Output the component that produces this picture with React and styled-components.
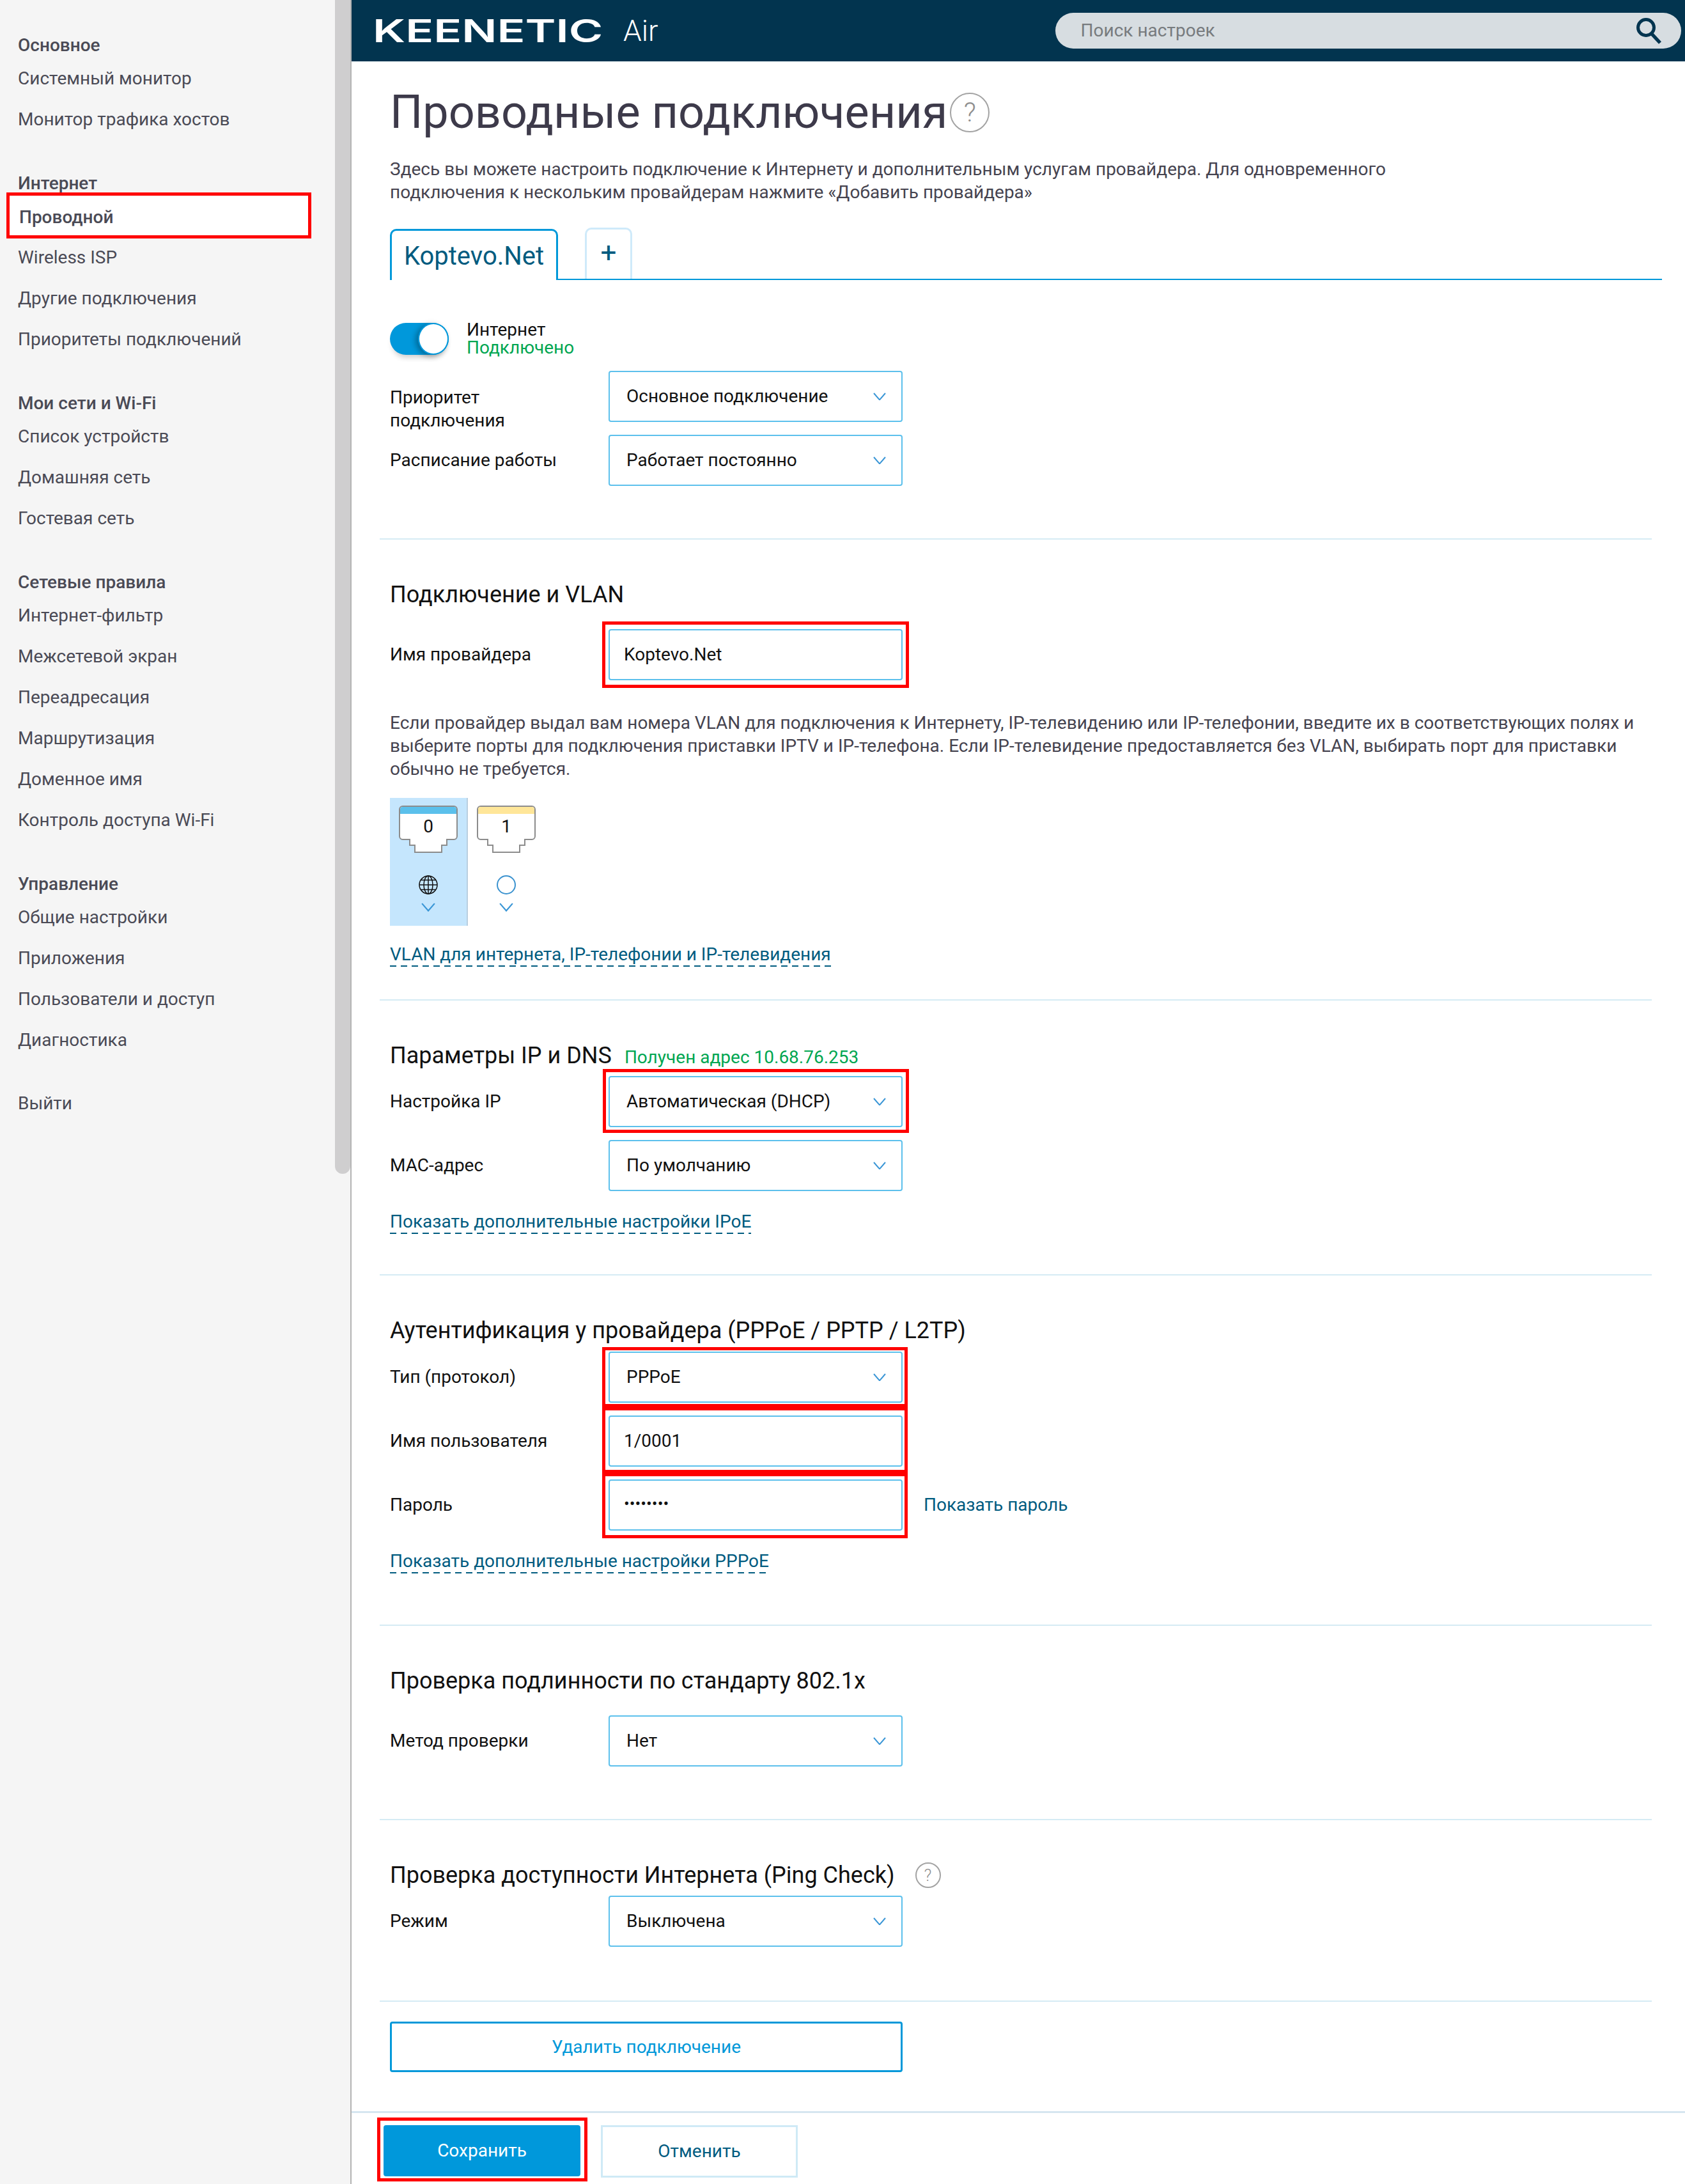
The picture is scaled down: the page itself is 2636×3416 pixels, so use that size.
import styled, { createGlobalStyle } from 'styled-components';

const GlobalStyle = createGlobalStyle`
    html, body {
        margin: 0;
        padding: 0;
        background: #ffffff;
    }
    * {
        box-sizing: border-box;
    }
`;

const menu = [
    { title: 'Основное', items: ['Системный монитор', 'Монитор трафика хостов'] },
    { title: 'Интернет', items: ['Проводной', 'Wireless ISP', 'Другие подключения', 'Приоритеты подключений'] },
    { title: 'Мои сети и Wi-Fi', items: ['Список устройств', 'Домашняя сеть', 'Гостевая сеть'] },
    { title: 'Сетевые правила', items: ['Интернет-фильтр', 'Межсетевой экран', 'Переадресация', 'Маршрутизация', 'Доменное имя', 'Контроль доступа Wi-Fi'] },
    { title: 'Управление', items: ['Общие настройки', 'Приложения', 'Пользователи и доступ', 'Диагностика'] },
];

const Chevron = ({ size = 20 }) => (
    <svg width={size} height={size * 0.62} viewBox="0 0 20 12.4" fill="none">
        <path d="M1 1l9 10.4L19 1" stroke="#3a96d6" strokeWidth="2" />
    </svg>
);

const Globe = () => (
    <svg width="30" height="30" viewBox="0 0 30 30" fill="none" stroke="#111" strokeWidth="1.5">
        <circle cx="15" cy="15" r="14" />
        <ellipse cx="15" cy="15" rx="7" ry="14" />
        <path d="M15 1v28M1 15h28M3.5 7.5h23M3.5 22.5h23" />
    </svg>
);

const Port = ({ number, band }) => (
    <svg width="92" height="74" viewBox="0 0 92 74">
        <path d="M1 6a5 5 0 0 1 5-5h80a5 5 0 0 1 5 5v42a5 5 0 0 1-5 5H75v9h-8v11H25V62h-8v-9H6a5 5 0 0 1-5-5z" fill="#fff" stroke="#8c8c8c" strokeWidth="2" />
        <path d="M2 13V6a4 4 0 0 1 4-4h80a4 4 0 0 1 4 4v7z" fill={band} />
        <text x="46" y="42" textAnchor="middle" fontFamily="Roboto, sans-serif" fontSize="28" fill="#111">{number}</text>
    </svg>
);

const SearchIcon = () => (
    <svg width="40" height="42" viewBox="0 0 40 42" fill="none" stroke="#02344f">
        <circle cx="15" cy="16" r="12.5" strokeWidth="5" />
        <path d="M24 26l13 14" strokeWidth="5.5" />
    </svg>
);

const Select = ({ value }) => (
    <Field>
        <span>{value}</span>
        <Chevron />
    </Field>
);

const App = () => {
    return (
        <>
            <GlobalStyle />
            <Page>
                <Sidebar>
                    {menu.map((group) => (
                        <MenuGroup key={group.title}>
                            <MenuTitle>{group.title}</MenuTitle>
                            {group.items.map((item) => (
                                <MenuItem key={item} $active={item === 'Проводной'}>{item}</MenuItem>
                            ))}
                        </MenuGroup>
                    ))}
                    <LogoutGroup>
                        <MenuItem>Выйти</MenuItem>
                    </LogoutGroup>
                    <ScrollThumb />
                </Sidebar>
                <Main>
                    <Header>
                        <Logo>KEENETIC</Logo>
                        <Model>Air</Model>
                        <Search>
                            <span>Поиск настроек</span>
                            <SearchIcon />
                        </Search>
                    </Header>
                    <Content>
                        <Intro>
                            <TitleRow>
                                <Title>Проводные подключения</Title>
                                <Help $size={62} $font={42}>?</Help>
                            </TitleRow>
                            <IntroText>
                                Здесь вы можете настроить подключение к Интернету и дополнительным услугам провайдера. Для одновременного<br />
                                подключения к нескольким провайдерам нажмите «Добавить провайдера»
                            </IntroText>
                            <Tabs>
                                <Tab>Koptevo.Net</Tab>
                                <AddTab>+</AddTab>
                            </Tabs>
                            <ToggleRow>
                                <Toggle><Knob /></Toggle>
                                <ToggleText>
                                    <span>Интернет</span>
                                    <Status>Подключено</Status>
                                </ToggleText>
                            </ToggleRow>
                            <Fields $top={22}>
                                <Row>
                                    <LongLabel>Приоритет<br />подключения</LongLabel>
                                    <Select value="Основное подключение" />
                                </Row>
                                <Row>
                                    <Label>Расписание работы</Label>
                                    <Select value="Работает постоянно" />
                                </Row>
                            </Fields>
                        </Intro>

                        <Section $bottom={51}>
                            <Heading>Подключение и VLAN</Heading>
                            <Fields $top={32}>
                                <Row>
                                    <Label>Имя провайдера</Label>
                                    <Marked $inset="-12px -10px -12px -10px">
                                        <Input>Koptevo.Net</Input>
                                    </Marked>
                                </Row>
                            </Fields>
                            <SectionText>
                                Если провайдер выдал вам номера VLAN для подключения к Интернету, IP-телевидению или IP-телефонии, введите их в соответствующих полях и<br />
                                выберите порты для подключения приставки IPTV и IP-телефона. Если IP-телевидение предоставляется без VLAN, выбирать порт для приставки<br />
                                обычно не требуется.
                            </SectionText>
                            <Ports>
                                <PortCell $selected>
                                    <Port number="0" band="#5bc0eb" />
                                    <Globe />
                                    <Chevron size={22} />
                                </PortCell>
                                <PortCell>
                                    <Port number="1" band="#ffe699" />
                                    <EmptyMark />
                                    <Chevron size={22} />
                                </PortCell>
                            </Ports>
                            <DashedLink $top={27}>VLAN для интернета, IP-телефонии и IP-телевидения</DashedLink>
                        </Section>

                        <Section $bottom={63}>
                            <HeadingRow>
                                <Heading>Параметры IP и DNS</Heading>
                                <HeadingStatus>Получен адрес 10.68.76.253</HeadingStatus>
                            </HeadingRow>
                            <Fields $top={10}>
                                <Row>
                                    <Label>Настройка IP</Label>
                                    <Marked $inset="-11px -10px -9px -9px">
                                        <Select value="Автоматическая (DHCP)" />
                                    </Marked>
                                </Row>
                                <Row>
                                    <Label>MAC-адрес</Label>
                                    <Select value="По умолчанию" />
                                </Row>
                            </Fields>
                            <DashedLink $top={30}>Показать дополнительные настройки IPoE</DashedLink>
                        </Section>

                        <Section $bottom={80}>
                            <Heading>Аутентификация у провайдера (PPPoE / PPTP / L2TP)</Heading>
                            <Fields $top={11}>
                                <Row>
                                    <Label>Тип (протокол)</Label>
                                    <Marked $inset="-7px -8px -7px -10px">
                                        <Select value="PPPoE" />
                                    </Marked>
                                </Row>
                                <Row>
                                    <Label>Имя пользователя</Label>
                                    <Marked $inset="-13px -8px -10px -10px">
                                        <Input>1/0001</Input>
                                    </Marked>
                                </Row>
                                <Row>
                                    <Label>Пароль</Label>
                                    <Marked $inset="-10px -8px -12px -10px">
                                        <Input><Dots>••••••••</Dots></Input>
                                    </Marked>
                                    <ShowPassword>Показать пароль</ShowPassword>
                                </Row>
                            </Fields>
                            <DashedLink $top={30}>Показать дополнительные настройки PPPoE</DashedLink>
                        </Section>

                        <Section $bottom={82}>
                            <Heading>Проверка подлинности по стандарту 802.1x</Heading>
                            <Fields $top={32}>
                                <Row>
                                    <Label>Метод проверки</Label>
                                    <Select value="Нет" />
                                </Row>
                            </Fields>
                        </Section>

                        <Section $bottom={84}>
                            <HeadingRow>
                                <Heading>Проверка доступности Интернета (Ping Check)</Heading>
                                <Help $size={40} $font={26} $center>?</Help>
                            </HeadingRow>
                            <Fields $top={10}>
                                <Row>
                                    <Label>Режим</Label>
                                    <Select value="Выключена" />
                                </Row>
                            </Fields>
                        </Section>

                        <DeleteBlock>
                            <DeleteButton>Удалить подключение</DeleteButton>
                        </DeleteBlock>
                    </Content>
                    <Footer>
                        <Marked $inset="-12px -11px -8px -10px">
                            <SaveButton>Сохранить</SaveButton>
                        </Marked>
                        <CancelButton>Отменить</CancelButton>
                    </Footer>
                </Main>
            </Page>
        </>
    );
};

export default App;

const Page = styled.div`
    display: flex;
    width: 2636px;
    height: 3416px;
    overflow: hidden;
    font-family: Roboto, "Noto Sans", sans-serif;
    font-size: 28px;
    line-height: 36px;
    color: #111111;
    background: #ffffff;
`;

const Sidebar = styled.nav`
    position: relative;
    flex: 0 0 550px;
    padding-top: 51px;
    background: #f5f5f5;
    border-right: 2px solid #b4b4b4;
    color: #4a4a55;
`;

const ScrollThumb = styled.div`
    position: absolute;
    top: 0;
    right: 0;
    width: 24px;
    height: 1836px;
    border-radius: 0 0 12px 12px;
    background: #cfcecf;
`;

const MenuGroup = styled.div`
    margin-bottom: 48px;
`;

const LogoutGroup = styled.div`
    margin-top: -13px;
`;

const MenuTitle = styled.div`
    height: 40px;
    padding: 2px 0 0 28px;
    font-weight: 500;
`;

const MenuItem = styled.div`
    position: relative;
    display: flex;
    align-items: center;
    height: 64px;
    padding-left: ${(p) => (p.$active ? '15px' : '28px')};
    padding-top: ${(p) => (p.$active ? '2px' : '0')};
    margin: ${(p) => (p.$active ? '0 66px 0 15px' : '0')};
    font-weight: ${(p) => (p.$active ? 500 : 400)};
    background: ${(p) => (p.$active ? '#ffffff' : 'transparent')};

    ${(p) => p.$active && `
        &::after {
            content: '';
            position: absolute;
            inset: -6px -5px -2px -5px;
            border: 5px solid #ff0000;
        }
    `}
`;

const Main = styled.div`
    flex: 1;
    display: flex;
    flex-direction: column;
    min-width: 0;
`;

const Header = styled.header`
    display: flex;
    align-items: center;
    flex: 0 0 96px;
    padding-left: 33px;
    background: #02344f;
    color: #ffffff;
`;

const Logo = styled.div`
    width: 357px;
    font-family: Inter, Roboto, sans-serif;
    font-size: 50px;
    font-weight: 600;
    line-height: 50px;
    white-space: nowrap;
    transform: scaleX(1.455);
    transform-origin: left center;
`;

const Model = styled.div`
    margin-left: 35px;
    font-size: 46px;
    font-weight: 300;
    line-height: 50px;
`;

const Search = styled.div`
    display: flex;
    align-items: center;
    justify-content: space-between;
    width: 979px;
    height: 56px;
    margin-left: 621px;
    padding: 0 30px 0 40px;
    border-radius: 28px;
    background: #d7dde1;
    color: #777b7e;
`;

const Content = styled.main`
    flex: 1;
    margin-left: 44px;
    width: 1990px;
`;

const Intro = styled.section`
    padding: 40px 0 82px 16px;
    border-bottom: 2px solid #d5ebf4;
`;

const TitleRow = styled.div`
    display: flex;
    align-items: center;
    height: 80px;
`;

const Title = styled.h1`
    margin: 0;
    font-size: 72px;
    font-weight: 400;
    line-height: 80px;
    color: #3d3a4a;
`;

const Help = styled.span`
    display: flex;
    align-items: center;
    justify-content: center;
    width: ${(p) => p.$size}px;
    height: ${(p) => p.$size}px;
    margin-left: ${(p) => (p.$center ? '32px' : '4px')};
    border: 2px solid #a3a3a3;
    border-radius: 50%;
    font-size: ${(p) => p.$font}px;
    font-weight: 300;
    color: #8f8f8f;
`;

const IntroText = styled.p`
    margin: 31px 0 0;
    color: #45434f;
`;

const Tabs = styled.div`
    display: flex;
    align-items: flex-end;
    width: 1990px;
    height: 82px;
    margin-top: 37px;
    border-bottom: 2px solid #0098d9;
`;

const Tab = styled.div`
    display: flex;
    align-items: center;
    justify-content: center;
    width: 263px;
    height: 80px;
    margin-bottom: -2px;
    padding-top: 2px;
    border: 3px solid #0098d9;
    border-bottom: none;
    border-radius: 10px 10px 0 0;
    background: #ffffff;
    font-size: 40px;
    color: #005b7f;
`;

const AddTab = styled.div`
    display: flex;
    align-items: center;
    justify-content: center;
    width: 74px;
    height: 80px;
    margin-left: 42px;
    padding-bottom: 6px;
    border: 3px solid #cfeafa;
    border-bottom: none;
    border-radius: 10px 10px 0 0;
    font-size: 44px;
    color: #005b7f;
`;

const ToggleRow = styled.div`
    display: flex;
    align-items: center;
    margin-top: 64px;
`;

const Toggle = styled.div`
    display: flex;
    justify-content: flex-end;
    width: 92px;
    height: 50px;
    border-radius: 25px;
    background: #0098db;
    box-shadow: 0 8px 8px -4px rgba(0, 0, 0, 0.2);
`;

const Knob = styled.div`
    width: 48px;
    height: 50px;
    border: 2px solid #0098db;
    border-radius: 50%;
    background: #ffffff;
    box-shadow: -4px 2px 8px rgba(0, 0, 0, 0.3);
`;

const ToggleText = styled.div`
    display: flex;
    flex-direction: column;
    margin-left: 28px;
    line-height: 28px;
`;

const Status = styled.span`
    color: #00a651;
`;

const Fields = styled.div`
    display: flex;
    flex-direction: column;
    gap: 20px;
    margin-top: ${(p) => p.$top}px;
`;

const Row = styled.div`
    display: flex;
    align-items: center;
`;

const Label = styled.div`
    flex: 0 0 342px;
`;

const LongLabel = styled(Label)`
    align-self: flex-start;
    height: 80px;
    padding-top: 24px;
`;

const Field = styled.div`
    display: flex;
    align-items: center;
    justify-content: space-between;
    width: 460px;
    height: 80px;
    padding: 0 24px 0 26px;
    border: 2px solid #5cc0ec;
    border-radius: 4px;
    background: #ffffff;
`;

const Input = styled(Field)`
    padding: 0 22px;
`;

const Dots = styled.span`
    font-size: 26px;
    margin-top: -4px;
`;

const Marked = styled.div`
    position: relative;

    &::after {
        content: '';
        position: absolute;
        inset: ${(p) => p.$inset};
        border: 5px solid #ff0000;
        pointer-events: none;
    }
`;

const ShowPassword = styled.span`
    margin-left: 33px;
    color: #005b7f;
`;

const Section = styled.section`
    padding: 64px 0 ${(p) => p.$bottom}px 16px;
    border-bottom: 2px solid #d5ebf4;
`;

const Heading = styled.h2`
    margin: 0;
    font-size: 36px;
    font-weight: 400;
    line-height: 44px;
`;

const HeadingRow = styled.div`
    display: flex;
    align-items: center;
`;

const HeadingStatus = styled.span`
    margin: 6px 0 0 20px;
    color: #00a651;
`;

const SectionText = styled.p`
    margin: 49px 0 0;
    color: #45434f;
`;

const Ports = styled.div`
    display: flex;
    margin-top: 27px;
`;

const PortCell = styled.div`
    display: flex;
    flex-direction: column;
    align-items: center;
    width: 122px;
    height: 200px;
    padding-top: 12px;
    background: ${(p) => (p.$selected ? '#c5e6fd' : 'transparent')};
    border-right: 2px solid ${(p) => (p.$selected ? '#b9cfe0' : 'transparent')};

    > svg:nth-child(2), > div:nth-child(2) {
        margin-top: 35px;
    }
    > svg:nth-child(3) {
        margin-top: 13px;
    }
`;

const EmptyMark = styled.div`
    width: 30px;
    height: 30px;
    border: 2px solid #3a92cf;
    border-radius: 50%;
`;

const DashedLink = styled.a`
    display: block;
    width: fit-content;
    margin-top: ${(p) => p.$top}px;
    padding-bottom: 1px;
    color: #005b7f;
    background: repeating-linear-gradient(to right, #005b7f 0 10px, transparent 10px 17px) left bottom / 100% 2px no-repeat;
`;

const DeleteBlock = styled.div`
    padding: 31px 0 0 16px;
`;

const DeleteButton = styled.div`
    display: flex;
    align-items: center;
    justify-content: center;
    width: 802px;
    height: 79px;
    border: 3px solid #0098d9;
    border-radius: 4px;
    color: #0098d9;
`;

const Footer = styled.footer`
    display: flex;
    align-items: flex-start;
    gap: 32px;
    flex: 0 0 114px;
    padding: 19px 0 0 50px;
    border-top: 3px solid #d6e6f0;
`;

const SaveButton = styled.div`
    display: flex;
    align-items: center;
    justify-content: center;
    width: 308px;
    height: 80px;
    border-radius: 4px;
    background: #0098db;
    color: #ffffff;
`;

const CancelButton = styled.div`
    display: flex;
    align-items: center;
    justify-content: center;
    width: 308px;
    height: 82px;
    border: 3px solid #cfeaf6;
    color: #005b7f;
`;
